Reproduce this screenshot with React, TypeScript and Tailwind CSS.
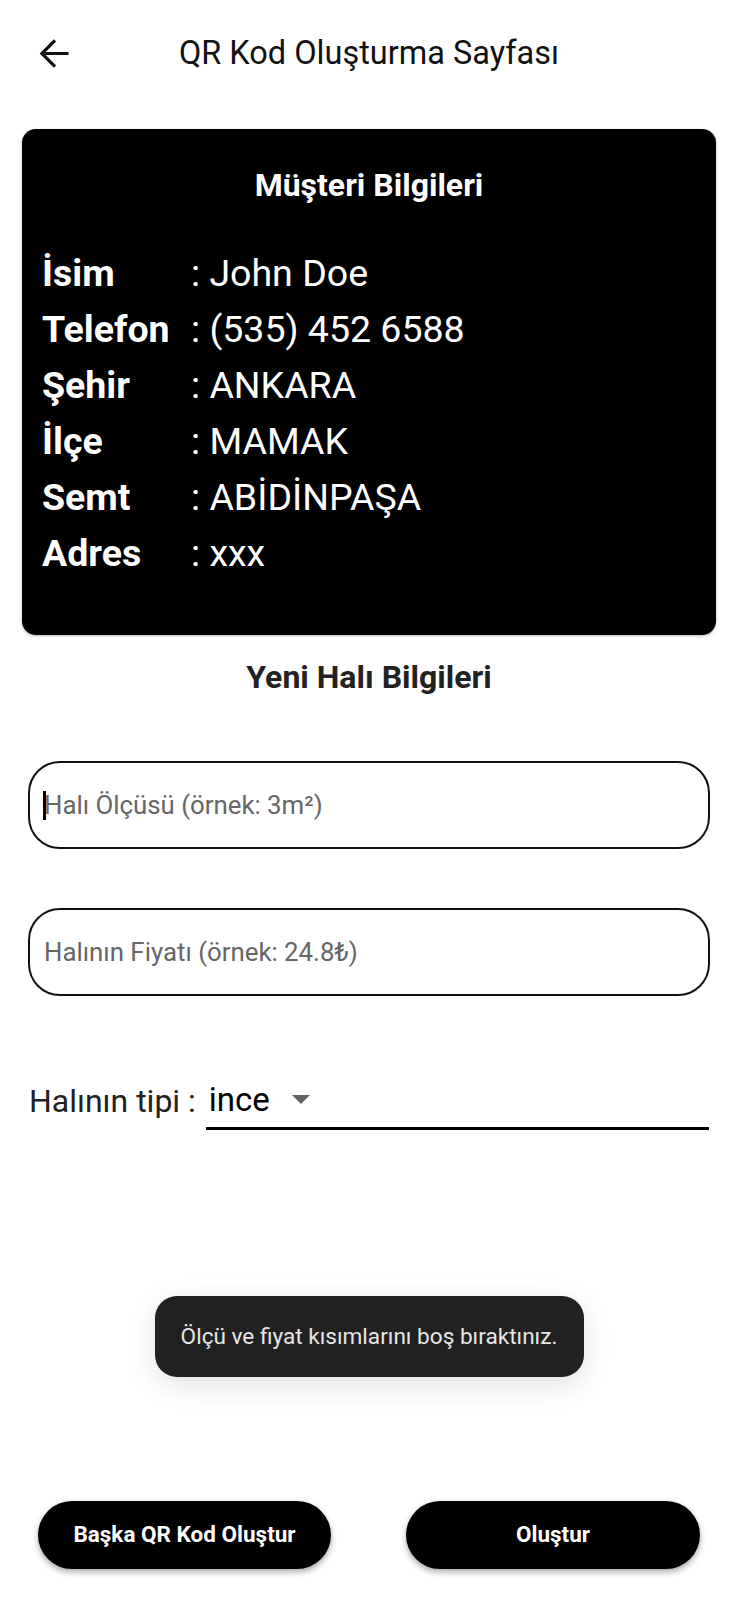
import { useState } from "react";

const customer = [
  { label: "İsim", value: "John Doe" },
  { label: "Telefon", value: "(535) 452 6588" },
  { label: "Şehir", value: "ANKARA" },
  { label: "İlçe", value: "MAMAK" },
  { label: "Semt", value: "ABİDİNPAŞA" },
  { label: "Adres", value: "xxx" },
];

export default function App() {
  const [size, setSize] = useState("");
  const [price, setPrice] = useState("");

  return (
    <div
      className="w-[738px] h-[1600px] bg-white flex flex-col text-black"
      style={{ fontFamily: "Roboto, 'Noto Sans', sans-serif" }}
    >
      {/* üst bar */}
      <div className="h-[106px] grid grid-cols-[1fr_auto_1fr] items-center">
        <button className="pl-[31px] justify-self-start">
          <svg width="45" height="45" viewBox="0 0 24 24" fill="#111">
            <path d="M20 11.2H7.83l5.59-5.59L12.2 4.4 4.6 12l7.6 7.6 1.22-1.21L7.83 12.8H20v-1.6z" />
          </svg>
        </button>
        <h1 className="text-[32.5px] leading-none text-[#111]">QR Kod Oluşturma Sayfası</h1>
        <div />
      </div>

      {/* müşteri kartı */}
      <div className="mt-[23px] mx-[22px] bg-black rounded-[14px] pt-[38px] pb-[54px] text-white shadow-[0_1px_3px_rgba(0,0,0,0.3)]">
        <h2 className="text-center text-[32px] leading-[36px] font-bold">Müşteri Bilgileri</h2>
        <div className="mt-[42px] pl-[20px]">
          {customer.map((row) => (
            <div key={row.label} className="h-[56px] flex items-center text-[37.5px]">
              <span className="w-[149px] font-bold">{row.label}</span>
              <span>: {row.value}</span>
            </div>
          ))}
        </div>
      </div>

      <h2 className="mt-[24px] text-center text-[32px] leading-[36px] font-bold text-[#212121]">
        Yeni Halı Bilgileri
      </h2>

      {/* girişler */}
      <div className="mt-[66px] mx-[28px] flex flex-col gap-[59px]">
        <div className="h-[88px] border-2 border-[#111] rounded-[32px] flex items-center pl-[13px]">
          <span className="w-[3px] h-[29px] bg-black shrink-0" />
          <input
            value={size}
            onChange={(e) => setSize(e.target.value)}
            placeholder="Halı Ölçüsü (örnek: 3m²)"
            className="ml-[-2px] w-full outline-none bg-transparent text-[25.8px] placeholder:text-[#666]"
          />
        </div>
        <div className="h-[88px] border-2 border-[#111] rounded-[32px] flex items-center pl-[14px]">
          <input
            value={price}
            onChange={(e) => setPrice(e.target.value)}
            placeholder="Halının Fiyatı (örnek: 24.8₺)"
            className="w-full outline-none bg-transparent text-[25.8px] placeholder:text-[#666]"
          />
        </div>
      </div>

      {/* halı tipi */}
      <div className="mt-[76px] mx-[29px] flex h-[58px]">
        <span className="flex items-center text-[32px] text-[#212121]">Halının tipi :</span>
        <div className="ml-[10px] flex-1 border-b-[3px] border-black flex items-center">
          <span className="ml-[3px] text-[33px] text-black">ince</span>
          <svg className="ml-[22px]" width="18" height="9" viewBox="0 0 18 9">
            <polygon points="0,0 18,0 9,9" fill="#616161" />
          </svg>
        </div>
      </div>

      {/* bildirim */}
      <div className="mt-[166px] self-center w-[429px] h-[81px] rounded-[22px] bg-[#212121] flex items-center justify-center shadow-[0_8px_30px_rgba(0,0,0,0.12)]">
        <span className="text-[22.6px] text-[#e6e6e6]">Ölçü ve fiyat kısımlarını boş bıraktınız.</span>
      </div>

      {/* butonlar */}
      <div className="mt-[124px] flex justify-between pl-[38px] pr-[38px]">
        <button className="w-[293px] h-[68px] rounded-full bg-black text-white text-[22.5px] font-bold shadow-[0_3px_6px_rgba(0,0,0,0.35)]">
          Başka QR Kod Oluştur
        </button>
        <button className="w-[294px] h-[68px] rounded-full bg-black text-white text-[22.5px] font-bold shadow-[0_3px_6px_rgba(0,0,0,0.35)]">
          Oluştur
        </button>
      </div>
    </div>
  );
}
